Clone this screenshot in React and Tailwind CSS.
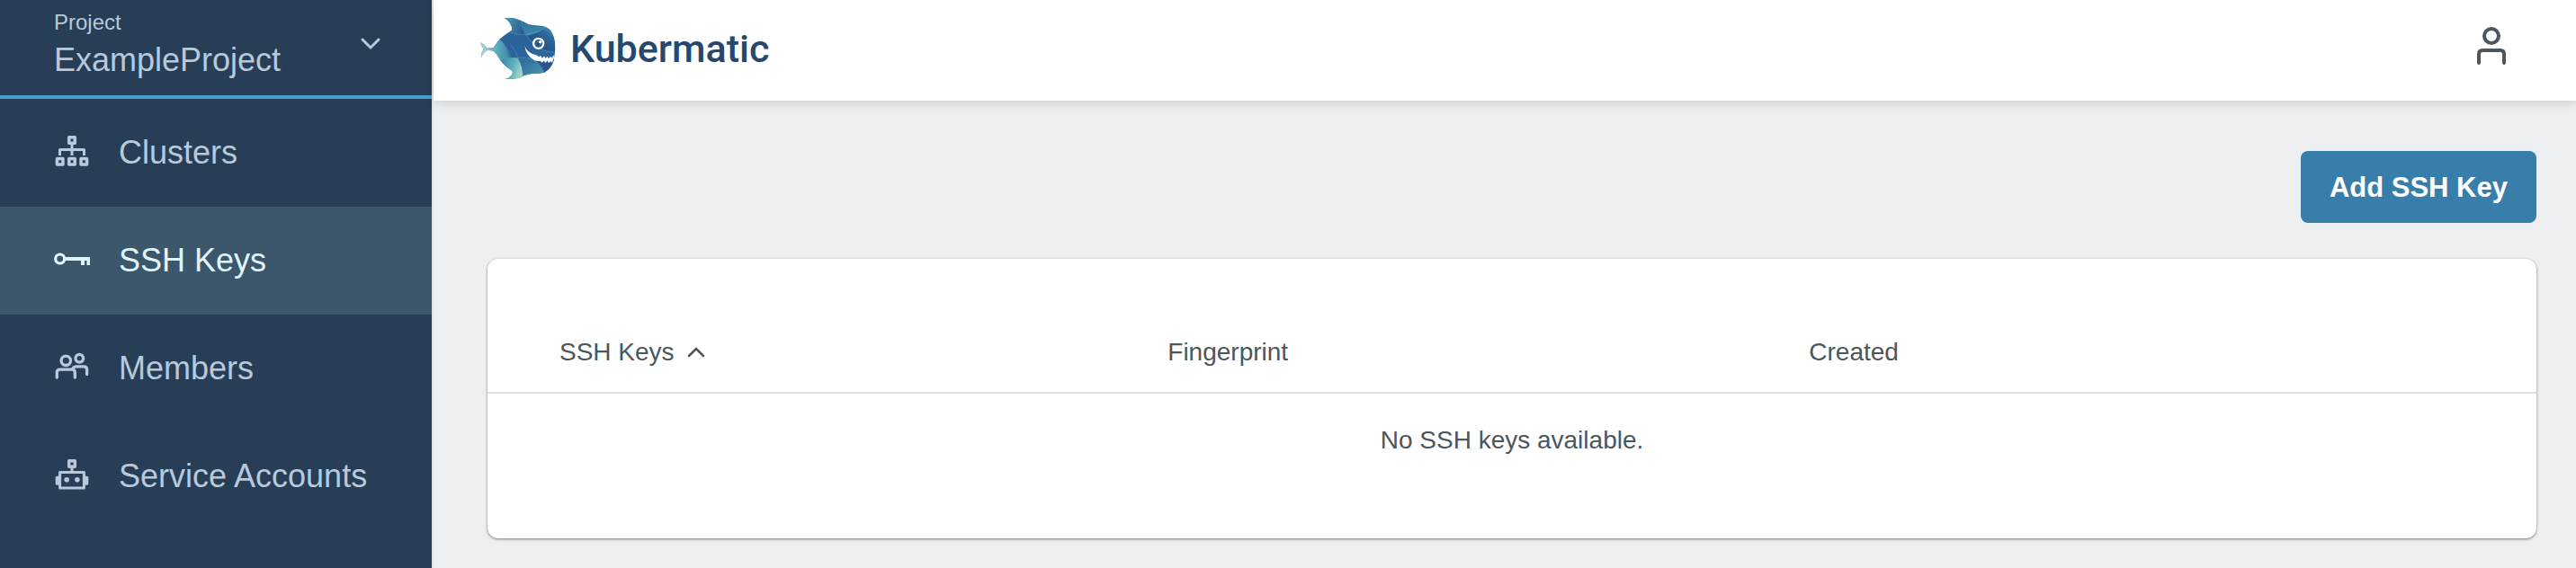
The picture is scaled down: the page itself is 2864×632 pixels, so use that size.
function FishLogo() {
  return (
    <svg className="h-[71px] w-[84px]" viewBox="42 53 252 213" aria-hidden="true">
      <defs>
        <linearGradient id="tail" x1="0" x2="1">
          <stop offset="0" stopColor="#b5dccb" />
          <stop offset=".5" stopColor="#5fb0bd" />
          <stop offset="1" stopColor="#3a83ab" />
        </linearGradient>
        <linearGradient id="fin" x1="0" x2="1" y1="0" y2=".4">
          <stop offset="0" stopColor="#4ea5b7" />
          <stop offset="1" stopColor="#2b5c90" />
        </linearGradient>
        <linearGradient id="back" x1="0" x2="0" y1="0" y2="1">
          <stop offset="0" stopColor="#2d6597" />
          <stop offset="1" stopColor="#3f8eb0" />
        </linearGradient>
        <linearGradient id="face" x1="1" x2=".4" y1="0" y2=".6">
          <stop offset="0" stopColor="#58b0bf" />
          <stop offset=".5" stopColor="#2f6a9a" />
          <stop offset="1" stopColor="#27568a" />
        </linearGradient>
        <linearGradient id="middle" x1="0" x2="1" y1="0" y2=".5">
          <stop offset="0" stopColor="#27649a" />
          <stop offset="1" stopColor="#2d659b" />
        </linearGradient>
        <linearGradient id="belly" x1="0" x2="1" y1="0" y2=".3">
          <stop offset="0" stopColor="#3482ab" />
          <stop offset=".65" stopColor="#5fb2bd" />
          <stop offset="1" stopColor="#a3d4c8" />
        </linearGradient>
        <linearGradient id="chin" x1="0" x2="1" y1="0" y2="1">
          <stop offset="0" stopColor="#2c659a" />
          <stop offset="1" stopColor="#4c9bb3" />
        </linearGradient>
        <clipPath id="fish">
          <path d="M42 137Q56 144 62 155Q74 158 86 155Q98 138 108 125Q126 110 146 98Q149 92 146 84Q140 66 122 56Q150 52 176 64Q188 69 203 78Q220 82 244 82Q262 84 276 97Q292 120 292 155Q291 180 287 198Q277 228 255 238Q240 242 220 241Q204 242 188 248Q172 262 124 260Q138 257 146 247Q152 240 148 232Q122 217 107 194Q98 178 88 168Q76 162 62 165Q53 171 45 188Q43 174 53 160Q46 150 42 137Z" />
        </clipPath>
      </defs>
      <g clipPath="url(#fish)">
        <path d="M42 50H294V264H42Z" fill="url(#middle)" />
        <path d="M42 110H104Q134 140 144 189L106 196L80 200H42Z" fill="url(#tail)" />
        <path d="M104 126Q150 112 198 115Q188 145 204 190L166 188L140 190Q132 150 104 126Z" fill="#2a639a" />
        <path d="M144 105L120 50H178Q180 88 196 116Q164 112 144 105Z" fill="url(#fin)" />
        <path d="M178 50L205 77L262 86Q238 110 198 115Q180 88 178 50Z" fill="url(#back)" />
        <path d="M262 84L294 84V170Q240 168 198 115Q238 110 262 84Z" fill="url(#face)" />
        <path d="M106 196Q130 187 166 189Q184 214 185 262H110Z" fill="url(#belly)" />
        <path d="M166 189Q200 186 224 196Q246 214 258 240L186 262Q186 220 166 189Z" fill="url(#chin)" />
        <path d="M224 196Q262 212 294 190V250H260Q246 214 224 196Z" fill="#28568a" />
        <g fill="none" stroke="#72adc8" strokeWidth="1.5" opacity=".75">
          <path d="M104 126Q134 150 144 189" />
          <path d="M144 105Q205 126 262 86" />
          <path d="M178 62Q182 122 240 158Q262 170 292 170" />
          <path d="M106 196Q130 187 166 189Q200 186 222 196Q246 214 258 240" />
          <path d="M142 142Q176 186 185 250" />
        </g>
      </g>
      <path d="M190 148Q195 171 229 180L238 186L243 181L248 190L256 183L259 191L266 184L269 192L277 184L279 190L290 178L286 194L281 206L277 200L270 207L266 198L259 207L254 198L248 205L242 199Q232 202 221 196Q194 181 190 148Z" fill="#fff" />
      <circle cx="236" cy="141" r="20" fill="#fff" />
      <circle cx="236" cy="141" r="13" fill="#27568a" />
      <circle cx="236" cy="141" r="8" fill="#5e93b5" />
      <circle cx="235" cy="142" r="6" fill="#1f4774" />
      <circle cx="242" cy="136" r="5" fill="#fff" />
    </svg>
  );
}

function ClustersIcon() {
  return (
    <svg className="size-10" viewBox="0 2 40 40" fill="none" stroke="currentColor" strokeWidth="3" aria-hidden="true">
      <path d="M20 11V25M6.500 25V18.500H33.500V25" strokeLinejoin="round" />
      <g strokeWidth="3.500" strokeLinejoin="round">
        <rect x="16.750" y="4.750" width="6.500" height="6.500" />
        <rect x="3.450" y="28.450" width="6.500" height="6.500" />
        <rect x="16.750" y="28.450" width="6.500" height="6.500" />
        <rect x="30.050" y="28.450" width="6.500" height="6.500" />
      </g>
    </svg>
  );
}

function KeyIcon() {
  return (
    <svg className="size-10" viewBox="0 2 40 40" aria-hidden="true">
      <circle cx="6.700" cy="20" r="5" fill="none" stroke="currentColor" strokeWidth="3.200" />
      <path d="M13 18H40V27H36.500V22H34V27H30V22H13Z" fill="currentColor" />
    </svg>
  );
}

function MembersIcon() {
  return (
    <svg className="size-10" viewBox="0 2 40 40" fill="none" stroke="currentColor" strokeWidth="3.300" strokeLinecap="round" aria-hidden="true">
      <circle cx="13.300" cy="13.300" r="5.200" />
      <circle cx="28.300" cy="10.700" r="4.300" />
      <path d="M3.300 32V26.500Q3.300 23.200 6.600 23.200H20Q23.300 23.200 23.300 26.500V32" />
      <path d="M21 22Q22 19.800 25 19.800H33.300Q36.600 19.800 36.600 23V28.500" />
    </svg>
  );
}

function RobotIcon() {
  return (
    <svg className="size-10" viewBox="0 2 40 40" fill="none" stroke="currentColor" strokeWidth="3" strokeLinejoin="round" aria-hidden="true">
      <rect x="16.700" y="4.700" width="6.600" height="6.600" strokeWidth="3.400" />
      <path d="M20 11V18" />
      <rect x="6.600" y="17.600" width="26.800" height="17.400" />
      <g fill="currentColor" stroke="none">
        <rect x="1.700" y="21.700" width="5" height="10" rx="1.600" />
        <rect x="33.300" y="21.700" width="5" height="10" rx="1.600" />
        <circle cx="14.200" cy="25.800" r="2.800" />
        <circle cx="25.900" cy="25.800" r="2.800" />
      </g>
    </svg>
  );
}

const links = [
  { label: "Clusters", Icon: ClustersIcon },
  { label: "SSH Keys", Icon: KeyIcon, active: true },
  { label: "Members", Icon: MembersIcon },
  { label: "Service Accounts", Icon: RobotIcon },
];

function Sidebar() {
  return (
    <aside className="w-[482px] shrink-0 border-r-2 border-[#e0e1e3] bg-[#283e56] text-[#b9c9dc]">
      <button
        type="button"
        className="flex h-[110px] w-full items-center justify-between border-b-4 border-[#479fd6] pr-14 pl-[60px] text-left"
      >
        <span className="flex flex-col">
          <span className="text-2xl leading-7">Project</span>
          <span className="text-4xl leading-[56px]">ExampleProject</span>
        </span>
        <svg className="mb-2 h-4 w-6" viewBox="0 0 24 16" fill="none" stroke="currentColor" strokeWidth="3" strokeLinecap="round" aria-hidden="true">
          <path d="M3 3L12 12L21 3" />
        </svg>
      </button>
      <nav>
        {links.map(({ label, Icon, active }) => (
          <a
            key={label}
            href="#"
            aria-current={active ? "page" : undefined}
            className={
              active
                ? "flex h-[120px] items-center gap-8 bg-[#3c576c] pl-[60px] text-4xl text-[#e0f4fd]"
                : "flex h-[120px] items-center gap-8 pl-[60px] text-4xl"
            }
          >
            <Icon />
            {label}
          </a>
        ))}
      </nav>
    </aside>
  );
}

function Header() {
  return (
    <header className="flex h-28 items-center justify-between bg-white pr-[70px] pl-[52px] shadow-[0_4px_10px_rgba(0,0,0,0.12)]">
      <a href="#" className="flex items-center gap-4 pb-1 font-[Roboto,sans-serif] text-[43px] font-medium text-[#27476f]">
        <FishLogo />
        Kubermatic
      </a>
      <button type="button" aria-label="Account" className="pb-2 text-[#4d565d]">
        <svg className="size-12" viewBox="0 0 48 48" fill="none" stroke="currentColor" strokeWidth="4" strokeLinecap="round" aria-hidden="true">
          <circle cx="24" cy="12" r="8" />
          <path d="M10 42V32Q10 28 14 28H34Q38 28 38 32V42" />
        </svg>
      </button>
    </header>
  );
}

export default function App() {
  return (
    <div className="flex min-h-screen bg-[#edeff1] font-['Liberation_Sans',Arial,sans-serif] text-[#4d565d]">
      <Sidebar />
      <div className="min-w-0 flex-1">
        <Header />
        <main className="flex flex-col gap-10 pt-14 pr-11 pb-8 pl-[60px]">
          <button type="button" className="h-20 self-end rounded-lg bg-[#387eab] px-8 pt-0.5 text-[31px] font-bold text-white">
            Add SSH Key
          </button>
          <section className="rounded-xl bg-white pt-[88px] pb-[93px] shadow-[0_1px_3px_rgba(0,0,0,0.5)]">
            <table className="w-full table-fixed text-[28px] leading-8">
              <thead>
                <tr className="h-[61px] border-b-2 border-[#e2e3e4] text-left align-top">
                  <th scope="col" className="w-[33.2%] pl-20 font-normal">
                    <button type="button" className="flex items-center gap-3.5">
                      SSH Keys
                      <svg className="h-4 w-5" viewBox="0 0 20 16" fill="none" stroke="currentColor" strokeWidth="2.500" strokeLinecap="round" aria-hidden="true">
                        <path d="M2 12L10 4L18 12" />
                      </svg>
                    </button>
                  </th>
                  <th scope="col" className="w-[31.3%] font-normal">Fingerprint</th>
                  <th scope="col" className="font-normal">Created</th>
                </tr>
              </thead>
              <tbody>
                <tr>
                  <td colSpan={3} className="pt-9 text-center">No SSH keys available.</td>
                </tr>
              </tbody>
            </table>
          </section>
        </main>
      </div>
    </div>
  );
}
